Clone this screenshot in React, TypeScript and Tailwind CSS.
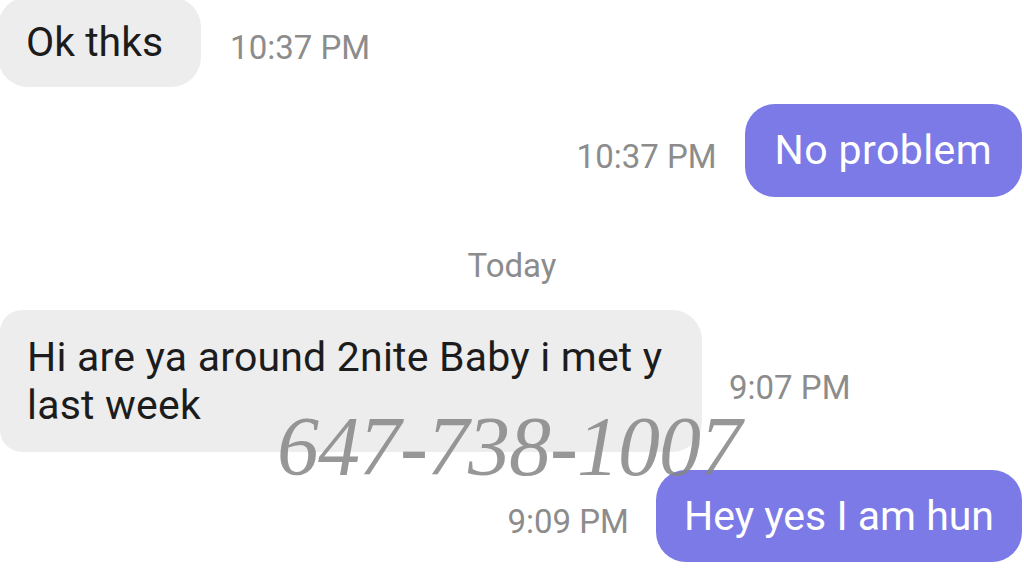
import React from "react";

const font = { fontFamily: "Roboto, 'Liberation Sans', sans-serif" };

export default function App() {
  return (
    <div
      className="relative w-[1024px] h-[575px] overflow-hidden bg-white"
      style={font}
    >
      <div className="flex flex-col">
        {/* Row 1 */}
        <div className="flex items-center mt-[-3px] h-[90px]">
          <div className="h-[90px] flex items-center pl-[26px] pr-[38px] bg-[#ededed] rounded-[30px] ml-[-2px]">
            <span className="text-[41px] leading-none text-[#1c1c1c] pl-[2px]">Ok thks</span>
          </div>
          <span className="ml-[29px] pt-[10px] text-[33px] leading-none text-[#8c8c8c]">10:37 PM</span>
        </div>

        {/* Row 2 */}
        <div className="flex items-center justify-end mt-[17px] pr-[2px]">
          <span className="mr-[28px] pt-[12px] text-[33px] leading-none text-[#8c8c8c]">10:37 PM</span>
          <div className="h-[93px] flex items-center px-[30px] bg-[#7b7ae6] rounded-[30px]">
            <span className="text-[41px] leading-none text-white tracking-[0.4px]">No problem</span>
          </div>
        </div>

        {/* Today */}
        <div className="mt-[48px] h-[40px] flex items-center justify-center">
          <span className="text-[33px] leading-none text-[#8c8c8c]">Today</span>
        </div>

        {/* Row 3 */}
        <div className="flex items-center mt-[25px]">
          <div className="w-[702px] h-[142px] flex items-center px-[27px] bg-[#ededed] rounded-[30px] rounded-l-[22px]">
            <p className="text-[41px] leading-[48px] text-[#1c1c1c] tracking-[0.2px]">
              Hi are ya around 2nite Baby i met y
              <br />
              last week
            </p>
          </div>
          <span className="ml-[27px] pt-[12px] text-[33px] leading-none text-[#8c8c8c]">9:07 PM</span>
        </div>

        {/* Row 4 */}
        <div className="flex items-center justify-end mt-[18px] pr-[2px]">
          <span className="mr-[27px] pt-[10px] text-[33px] leading-none text-[#8c8c8c]">9:09 PM</span>
          <div className="h-[92px] flex items-center px-[28px] bg-[#7b7ae6] rounded-[30px]">
            <span className="text-[41px] leading-none text-white">Hey yes I am hun</span>
          </div>
        </div>
      </div>

      {/* Watermark */}
      <div
        className="absolute left-[277px] top-[405px] text-[84px] leading-none italic text-[#858585]/85 whitespace-nowrap tracking-[-1px]"
        style={{ fontFamily: "'Liberation Serif', 'DejaVu Serif', serif" }}
      >
        647-738-1007
      </div>
    </div>
  );
}
